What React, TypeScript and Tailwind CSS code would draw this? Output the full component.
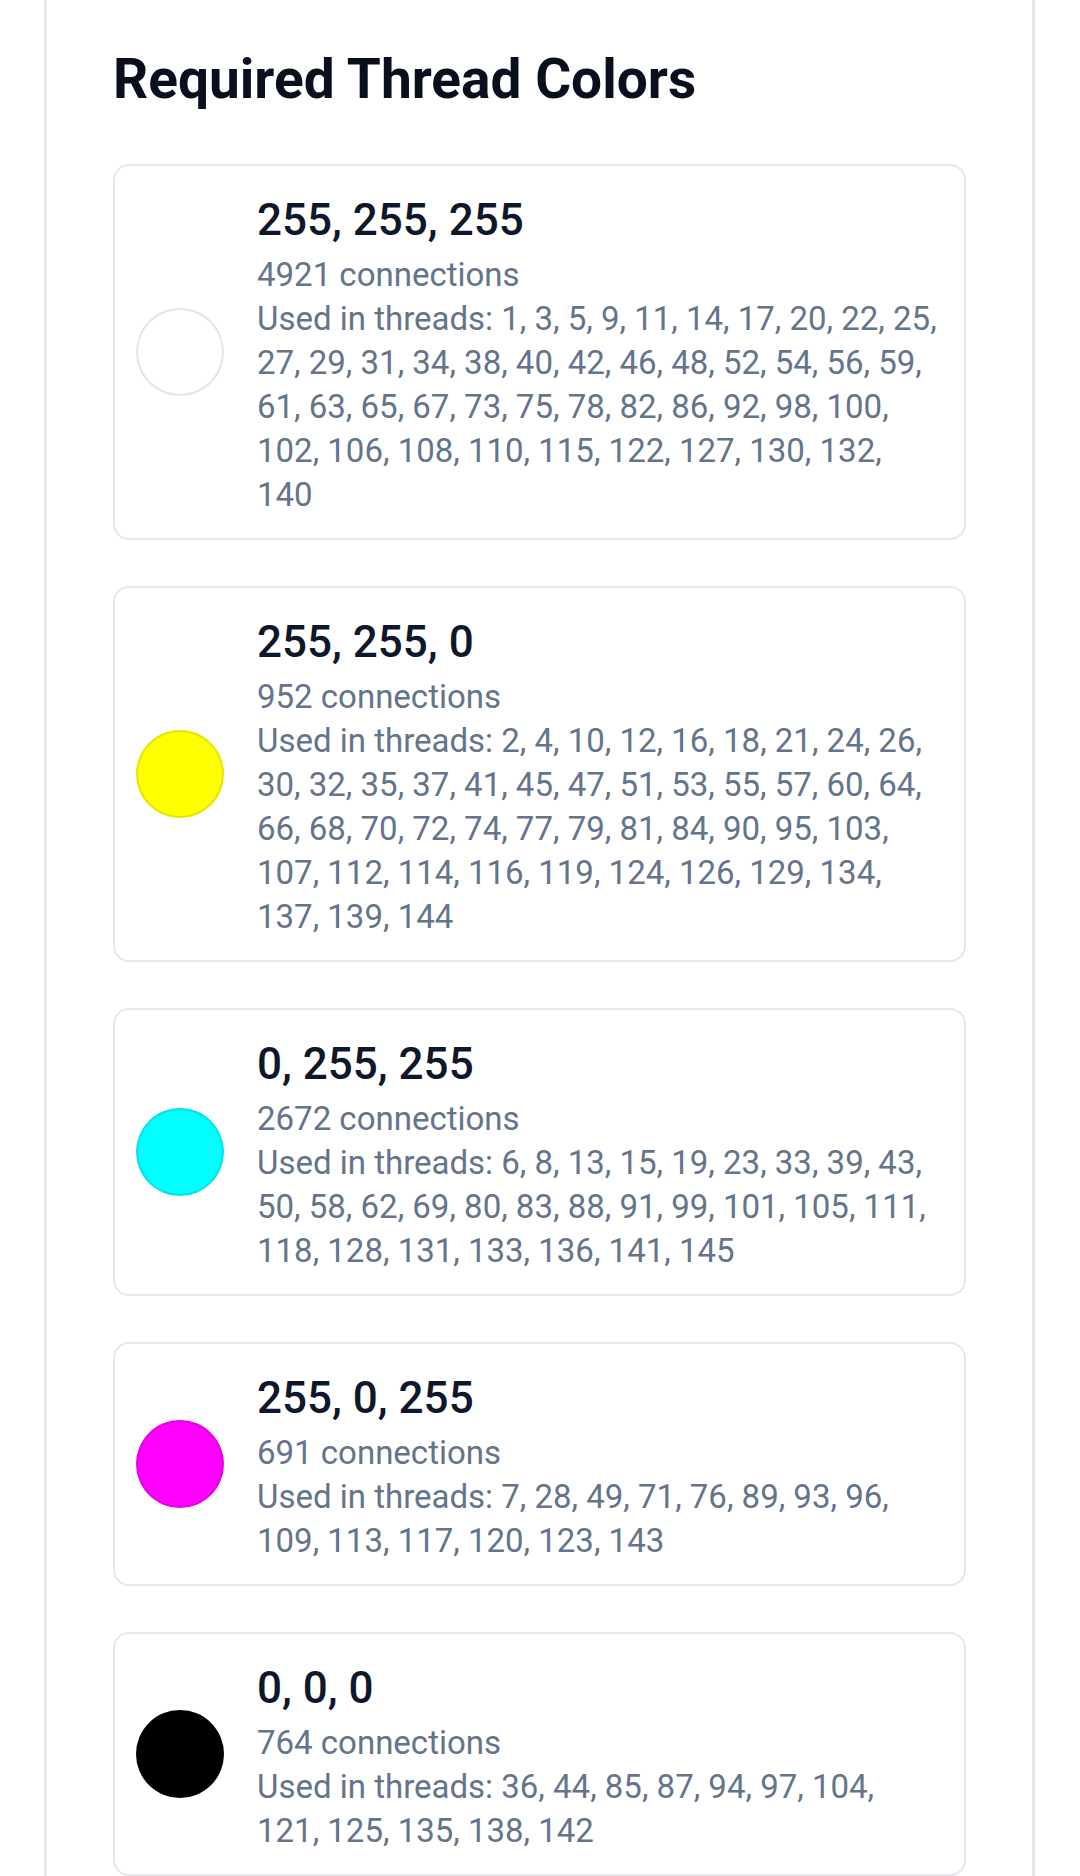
type ThreadColor = {
  rgb: [number, number, number]
  connections: number
  threads: number[]
}

const colors: ThreadColor[] = [
  {
    rgb: [255, 255, 255],
    connections: 4921,
    threads: [1, 3, 5, 9, 11, 14, 17, 20, 22, 25, 27, 29, 31, 34, 38, 40, 42, 46, 48, 52, 54, 56, 59, 61, 63, 65, 67, 73, 75, 78, 82, 86, 92, 98, 100, 102, 106, 108, 110, 115, 122, 127, 130, 132, 140],
  },
  {
    rgb: [255, 255, 0],
    connections: 952,
    threads: [2, 4, 10, 12, 16, 18, 21, 24, 26, 30, 32, 35, 37, 41, 45, 47, 51, 53, 55, 57, 60, 64, 66, 68, 70, 72, 74, 77, 79, 81, 84, 90, 95, 103, 107, 112, 114, 116, 119, 124, 126, 129, 134, 137, 139, 144],
  },
  {
    rgb: [0, 255, 255],
    connections: 2672,
    threads: [6, 8, 13, 15, 19, 23, 33, 39, 43, 50, 58, 62, 69, 80, 83, 88, 91, 99, 101, 105, 111, 118, 128, 131, 133, 136, 141, 145],
  },
  {
    rgb: [255, 0, 255],
    connections: 691,
    threads: [7, 28, 49, 71, 76, 89, 93, 96, 109, 113, 117, 120, 123, 143],
  },
  {
    rgb: [0, 0, 0],
    connections: 764,
    threads: [36, 44, 85, 87, 94, 97, 104, 121, 125, 135, 138, 142],
  },
]

function ColorCard({ color }: { color: ThreadColor }) {
  const [r, g, b] = color.rgb
  return (
    <div className="flex items-center gap-[33px] rounded-[16px] border-2 border-[#e5e7eb] bg-white py-[21px] pl-[21px] pr-[22px]">
      <div
        className="h-[88px] w-[88px] shrink-0 rounded-full border-2 border-[rgba(0,0,0,0.1)]"
        style={{ backgroundColor: `rgb(${r}, ${g}, ${b})` }}
      />
      <div className="min-w-0 flex-1">
        <h3 className="text-[44px] font-medium leading-[66px] text-[#0f172a]">
          {r}, {g}, {b}
        </h3>
        <p className="text-[33px] leading-[44px] text-[#64748b]">{color.connections} connections</p>
        <p className="text-[33px] leading-[44px] text-[#64748b]">
          Used in threads: {color.threads.join(', ')}
        </p>
      </div>
    </div>
  )
}

export default function App() {
  return (
    <div className="min-h-[1876px] bg-white font-['Roboto',sans-serif]">
      <div className="ml-[44px] w-[991px] border-x-[3px] border-[#e5e7eb] px-[66px] pt-[41px] pb-[66px]">
        <h2 className="text-[55px] font-bold leading-[77px] text-[#0a0f1e]">Required Thread Colors</h2>

        <div className="mt-[46px] flex flex-col gap-[46px]">
          {colors.map(c => (
            <ColorCard key={c.rgb.join('-')} color={c} />
          ))}
        </div>
      </div>
    </div>
  )
}
